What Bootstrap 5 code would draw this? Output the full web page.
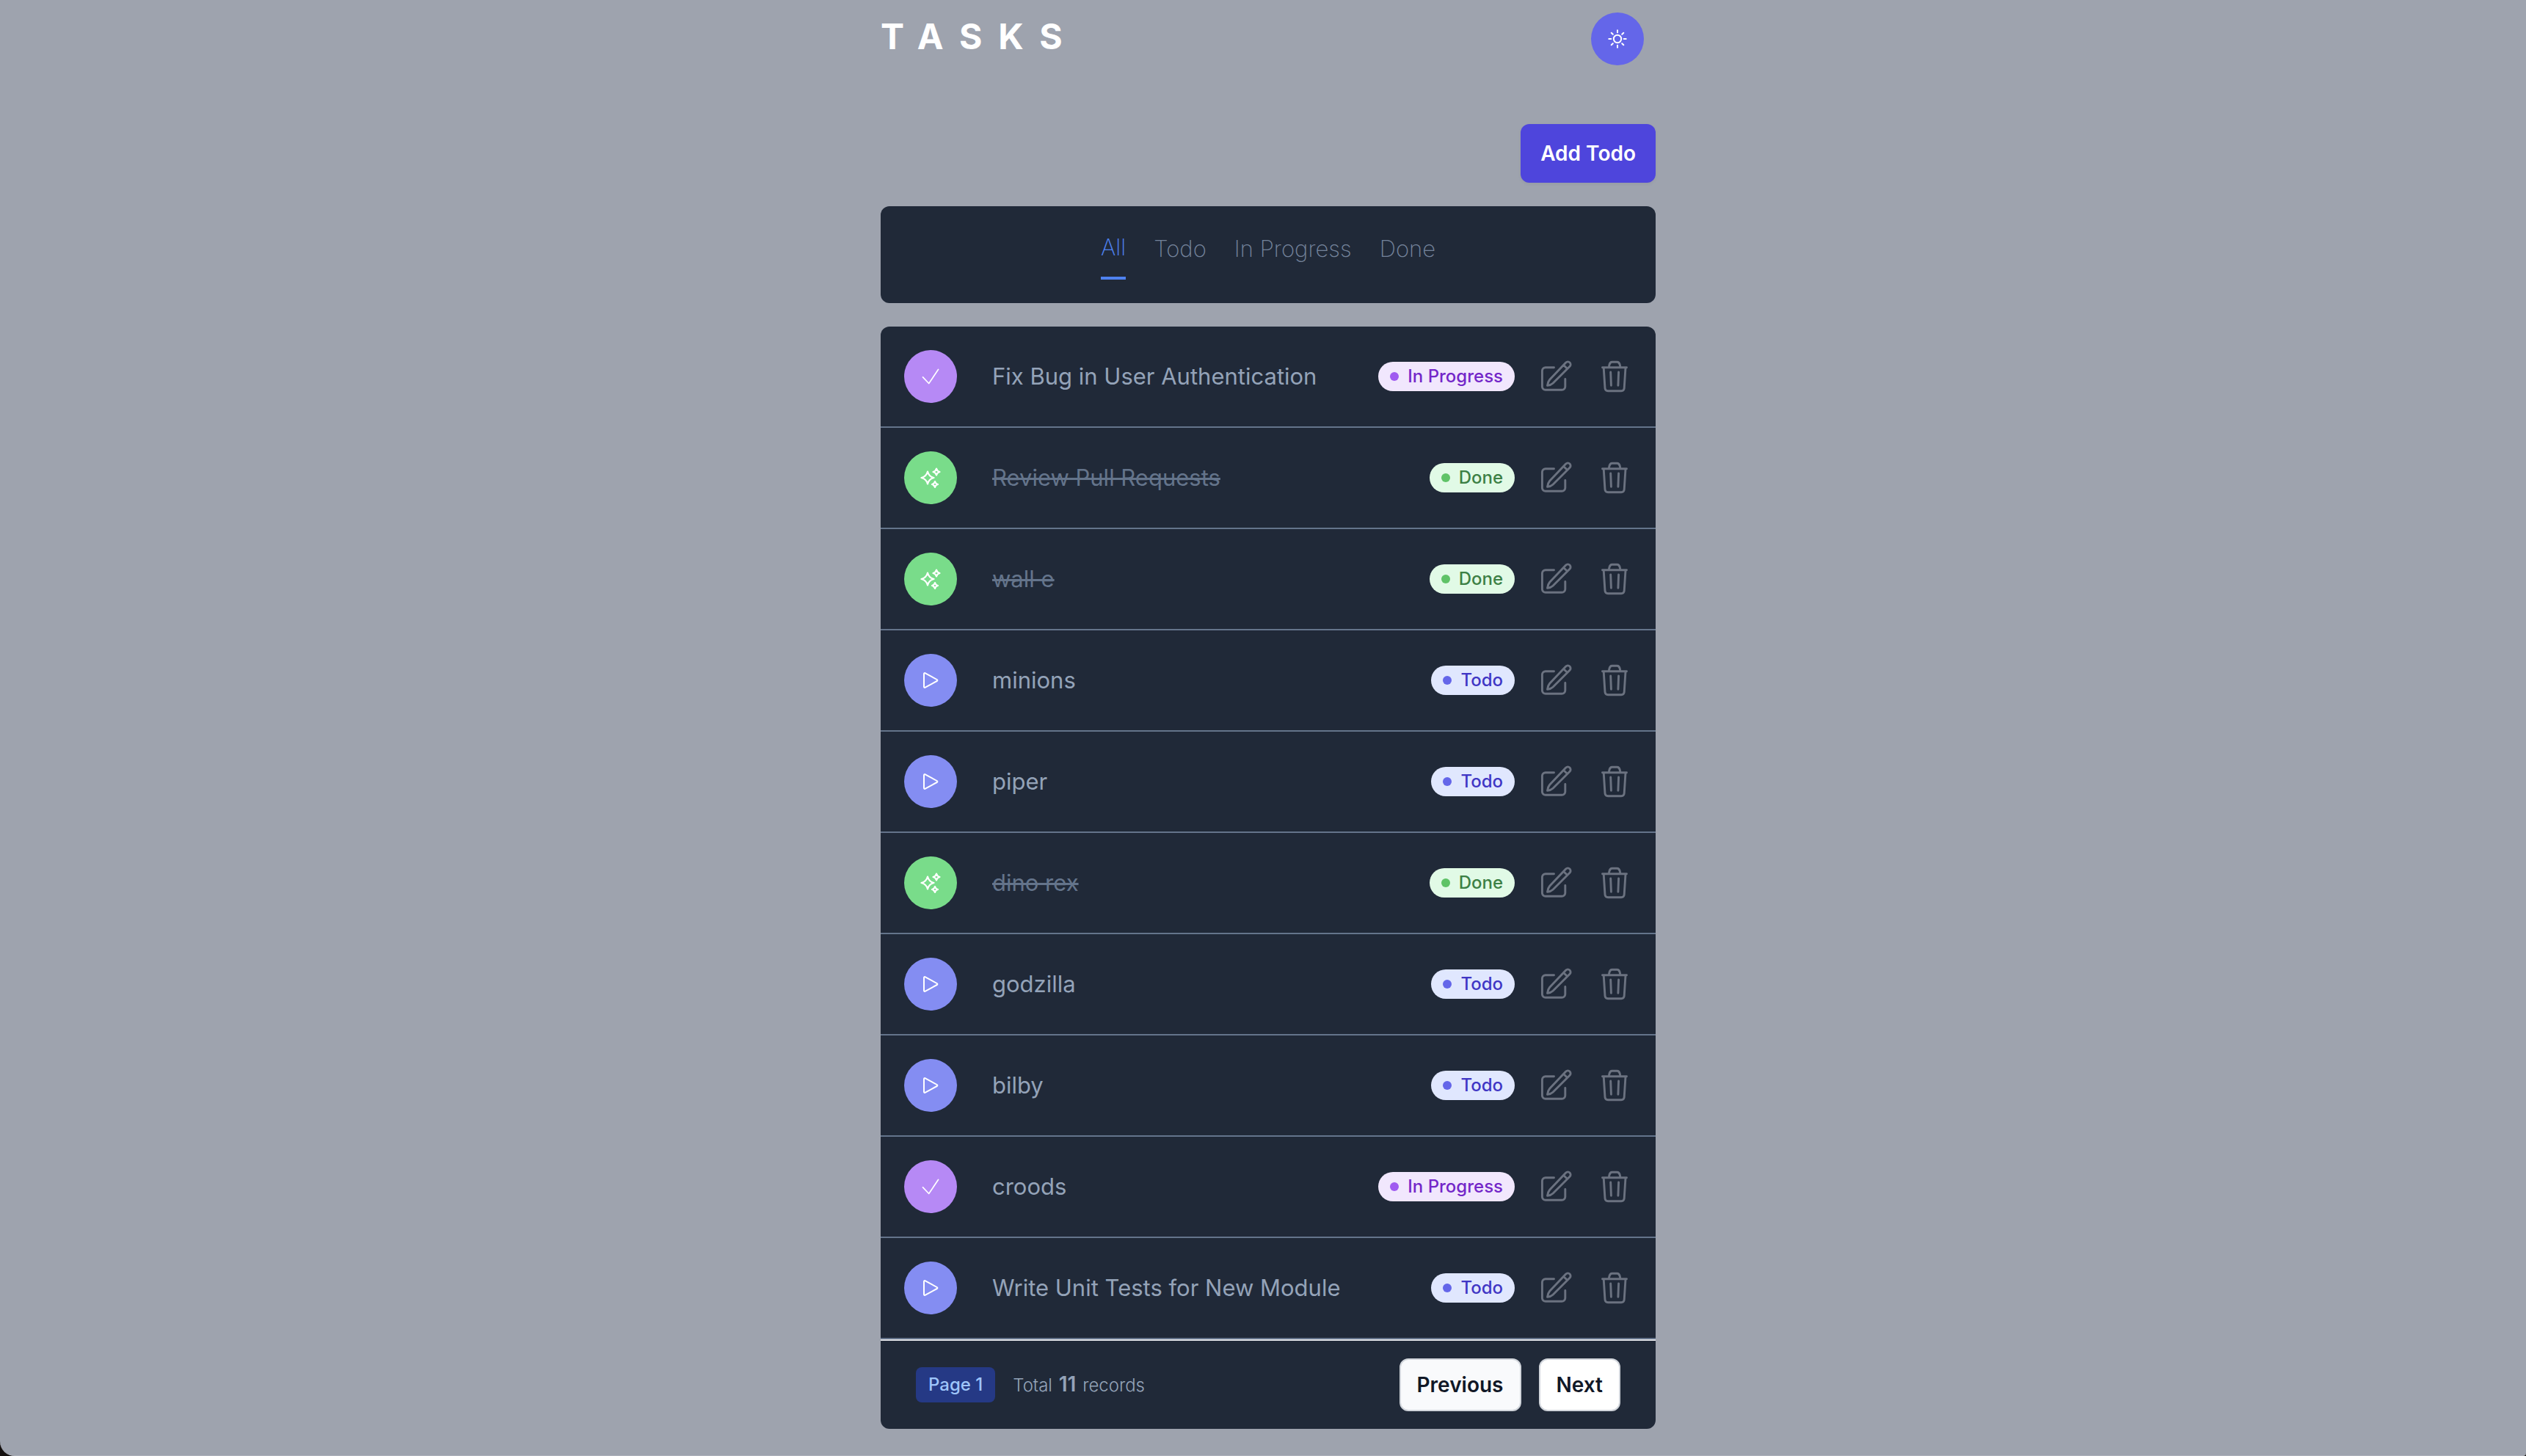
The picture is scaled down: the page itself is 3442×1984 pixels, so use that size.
<!DOCTYPE html>
<html lang="en">
<head>
<meta charset="utf-8">
<meta name="viewport" content="width=device-width, initial-scale=1">
<title>Tasks</title>
<link rel="stylesheet" href="https://cdn.jsdelivr.net/npm/bootstrap@5.3.0/dist/css/bootstrap.min.css">
<style>
  body { background: #14100f; font-family: Inter, "Liberation Sans", sans-serif; }
  .page-shell { background: #9ea3ae; border-radius: 0 0 4px 20px; border-bottom: 1px solid #adb1ba; padding-left: 14px; }
  .task-column { max-width: 1056px; }
  .app-header { padding: 17px 16px 0 0; margin-bottom: 80px; }
  .app-title { font-size: 48px; line-height: 66px; font-weight: 700; letter-spacing: 22px; color: #fff; }
  .panel { background: #202938; border-radius: 12px; overflow: hidden; }
  .round-btn { width: 72px; height: 72px; border: 0; color: #fff; flex: none; }
  .round-btn svg { width: 32px; height: 32px; }
  .tone-theme { background: #6466e9; }
  .tone-progress { background: #b689f5; }
  .tone-done { background: #79dc8a; }
  .tone-todo { background: #848df2; }
  .btn-add { --bs-btn-color: #fff; --bs-btn-bg: #4e45dc; --bs-btn-hover-color: #fff; --bs-btn-hover-bg: #4338ca;
    height: 80px; padding: 0 27px; border: 0; border-radius: 12px; font-size: 28px; font-weight: 600; box-shadow: 0 2px 4px rgba(0, 0, 0, .05); }
  .gap-section { margin-bottom: 32px; }
  .filter-bar { height: 132px; gap: 38px; font-size: 31px; line-height: 48px; font-weight: 200; }
  .filter-bar a { color: #74839b; text-decoration: none; padding-top: 34px; }
  .filter-bar a.active { color: #4f82f0; padding: 32px 0 16px; border-bottom: 4px solid #4f82f0; }
  .task-row { height: 138px; padding: 0 32px; border-bottom: 2px solid #64748b; }
  .task-name { font-size: 31px; line-height: 48px; margin-left: 48px; color: #94a3b8; }
  .task-name del { color: #64748b; text-decoration-thickness: 3px; }
  .status-pill { height: 40px; padding: 0 16px; gap: 12px; border-radius: 20px; font-size: 24px; line-height: 40px; font-weight: 500; margin-right: 32px; }
  .status-pill i { width: 12px; height: 12px; border-radius: 50%; }
  .pill-progress { background: #f1e7fd; color: #7427c9; }
  .pill-progress i { background: #9f5af0; }
  .pill-done { background: #e1fae6; color: #3c8045; }
  .pill-done i { background: #5fc367; }
  .pill-todo { background: #e0e7fe; color: #4036c5; }
  .pill-todo i { background: #6466e9; }
  .icon-btn { width: 48px; height: 48px; padding: 0; border: 0; background: none; color: #6b7280; display: flex; }
  .icon-btn + .icon-btn { margin-left: 32px; }
  .icon-btn svg { width: 48px; height: 48px; }
  .list-footer { height: 122px; padding: 0 48px; border-top: 2px solid #e3e5ea; }
  .page-chip { height: 48px; padding: 0 17px; border-radius: 8px; background: #253985; color: #9ec5fa; font-size: 24px; line-height: 48px; font-weight: 500; }
  .totals { margin-left: 24px; font-size: 24px; line-height: 40px; font-weight: 300; color: #94a3b8; }
  .totals strong { font-size: 28px; font-weight: 600; margin: 0 2px; }
  .btn-page { --bs-btn-color: #111827; --bs-btn-bg: #fff; --bs-btn-border-color: #d1d5db; --bs-btn-hover-bg: #f9fafb; --bs-btn-hover-color: #111827; --bs-btn-hover-border-color: #d1d5db;
    height: 72px; padding: 0 22px; border-width: 2px; border-radius: 12px; font-size: 28px; font-weight: 600; }
  .btn-page.is-hovered { --bs-btn-bg: #f9fafc; }
</style>
</head>
<body>
<svg class="d-none" aria-hidden="true">
  <symbol id="i-sun" viewBox="0 0 32 32"><g fill="none" stroke="currentColor" stroke-width="2" stroke-linecap="round"><circle cx="16" cy="16" r="5.2"/><path d="M16 4.300v3M16 24.700v3M4.300 16h3M24.700 16h3M7.700 7.700l2.100 2.100M22.200 22.200l2.100 2.100M7.700 24.300l2.100-2.100M22.200 9.800l2.100-2.100"/></g></symbol>
  <symbol id="i-check" viewBox="0 0 32 32"><path d="M5.500 16.800l8.200 8.700L26.500 6.500" fill="none" stroke="currentColor" stroke-width="1.700" stroke-linecap="round" stroke-linejoin="round"/></symbol>
  <symbol id="i-play" viewBox="0 0 32 32"><path d="M7 7.300v17.400c0 1 1 1.500 1.900 1L24.700 17c.9-.5.9-1.500 0-2L8.900 6.300C8 5.800 7 6.300 7 7.300z" fill="none" stroke="currentColor" stroke-width="2" stroke-linejoin="round"/></symbol>
  <symbol id="i-sparkles" viewBox="0 0 32 32"><g fill="none" stroke="currentColor" stroke-width="2.200" stroke-linejoin="round"><path d="M12 7.500c1.200 5 3.500 7.300 8.500 8.500-5 1.200-7.300 3.500-8.500 8.500-1.200-5-3.500-7.300-8.500-8.500 5-1.200 7.300-3.500 8.500-8.500z"/><path d="M24 3.500c.7 2.700 1.800 3.800 4.500 4.500-2.700.7-3.800 1.800-4.500 4.500-.7-2.700-1.800-3.800-4.500-4.500 2.700-.7 3.800-1.800 4.500-4.500z"/><path d="M22 21c.6 2.400 1.600 3.400 4 4-2.400.6-3.400 1.600-4 4-.6-2.400-1.600-3.400-4-4 2.400-.6 3.400-1.600 4-4z"/></g></symbol>
  <symbol id="i-edit" viewBox="0 0 48 48"><g fill="none" stroke="currentColor" stroke-width="2.900" stroke-linecap="round" stroke-linejoin="round"><path d="M21.500 11.700H10a4.600 4.600 0 0 0-4.600 4.600v21.400a4.600 4.600 0 0 0 4.600 4.600h22.200a4.600 4.600 0 0 0 4.600-4.600V27.500"/><path d="M37.700 5a3.700 3.700 0 0 1 5.300 5.300L20 33.200c-2 1.900-4.300 2.800-7.500 3.200.4-3.200 1.300-5.900 3.200-8.100zM34.500 8.500l4.800 4.500"/></g></symbol>
  <symbol id="i-trash" viewBox="0 0 48 48"><g fill="none" stroke="currentColor" stroke-width="2.900" stroke-linecap="round" stroke-linejoin="round"><path d="M7.500 11.800h33M16.200 11.500l.8-3.600c.5-2.300 1.700-3.700 3.700-3.700h6.800c2 0 3.200 1.400 3.700 3.700l.8 3.600M9.200 12l1.800 28c.2 2.500 1.500 3.800 4 3.800h18.200c2.500 0 3.800-1.300 4-3.800L39 12M18.700 18l.7 18.300M29.600 18l-.7 18.300"/></g></symbol>
</svg>

<div class="page-shell min-vh-100">
  <main class="task-column mx-auto">
    <header class="app-header d-flex justify-content-between align-items-start">
      <h1 class="app-title mb-0">TASKS</h1>
      <button type="button" class="round-btn tone-theme rounded-circle d-flex align-items-center justify-content-center" aria-label="Toggle theme"><svg><use href="#i-sun"/></svg></button>
    </header>

    <div class="d-flex justify-content-end gap-section">
      <button type="button" class="btn btn-add">Add Todo</button>
    </div>

    <nav class="panel filter-bar d-flex justify-content-center align-items-start gap-section" aria-label="Filter tasks">
      <a href="#all" class="active" aria-current="page">All</a>
      <a href="#todo">Todo</a>
      <a href="#in-progress">In Progress</a>
      <a href="#done">Done</a>
    </nav>

    <section class="panel">
      <ul class="list-unstyled mb-0" id="tasks"></ul>
      <footer class="list-footer d-flex align-items-center">
        <span class="page-chip">Page 1</span>
        <span class="totals">Total <strong>11</strong> records</span>
        <div class="d-flex gap-4 ms-auto">
          <button type="button" class="btn btn-page is-hovered">Previous</button>
          <button type="button" class="btn btn-page">Next</button>
        </div>
      </footer>
    </section>
  </main>
</div>

<script src="https://cdn.jsdelivr.net/npm/bootstrap@5.3.0/dist/js/bootstrap.bundle.min.js"></script>
<script>
  const statuses = {
    progress: { label: 'In Progress', icon: 'check' },
    done: { label: 'Done', icon: 'sparkles' },
    todo: { label: 'Todo', icon: 'play' }
  };
  const tasks = [
    ['Fix Bug in User Authentication', 'progress'],
    ['Review Pull Requests', 'done'],
    ['wall e', 'done'],
    ['minions', 'todo'],
    ['piper', 'todo'],
    ['dino rex', 'done'],
    ['godzilla', 'todo'],
    ['bilby', 'todo'],
    ['croods', 'progress'],
    ['Write Unit Tests for New Module', 'todo']
  ];
  document.getElementById('tasks').innerHTML = tasks.map(([name, key]) => `
    <li class="task-row d-flex align-items-center">
      <button type="button" class="round-btn tone-${key} rounded-circle d-flex align-items-center justify-content-center" aria-label="Change status"><svg><use href="#i-${statuses[key].icon}"/></svg></button>
      <span class="task-name me-auto">${key === 'done' ? `<del>${name}</del>` : name}</span>
      <span class="status-pill pill-${key} d-flex align-items-center"><i></i>${statuses[key].label}</span>
      <button type="button" class="icon-btn" aria-label="Edit"><svg><use href="#i-edit"/></svg></button>
      <button type="button" class="icon-btn" aria-label="Delete"><svg><use href="#i-trash"/></svg></button>
    </li>`).join('');
</script>
</body>
</html>
